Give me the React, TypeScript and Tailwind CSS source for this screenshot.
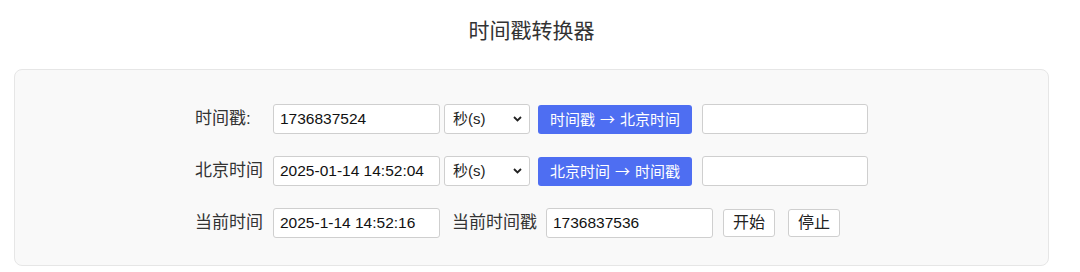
import React, { useState } from 'react';

const font = { fontFamily: '"Liberation Sans", "Noto Sans CJK SC", sans-serif' };
const cjk = { fontFamily: '"Noto Sans CJK SC", "Liberation Sans", sans-serif' };

function UnitSelect() {
  const [unit, setUnit] = useState('s');
  return (
    <div className="relative ml-[4px] w-[86px] h-[30px]">
      <select
        value={unit}
        onChange={(e) => setUnit(e.target.value)}
        className="appearance-none w-full h-full bg-white border border-[#cfcfcf] rounded-[3px] pl-[8px] text-[15px] text-[#222] outline-none"
      >
        <option value="s">秒(s)</option>
        <option value="ms">毫秒(ms)</option>
      </select>
      <svg
        className="absolute right-[8px] top-[12px] pointer-events-none"
        width="9"
        height="6"
        viewBox="0 0 9 6"
      >
        <path d="M1 1l3.5 3.5L8 1" fill="none" stroke="#222" strokeWidth="1.8" />
      </svg>
    </div>
  );
}

function ConvertButton({ from, to }: { from: string; to: string }) {
  return (
    <button
      className="ml-[8px] w-[154px] h-[29px] rounded-[3px] bg-[#4e6ef2] text-white text-[15px] flex items-center justify-center"
      style={cjk}
    >
      {from}
      <span className="mx-[5px]">→</span>
      {to}
    </button>
  );
}

export default function App() {
  const [ts, setTs] = useState('1736837524');
  const [bj, setBj] = useState('2025-01-14 14:52:04');

  const inputCls =
    'h-[30px] bg-white border border-[#cfcfcf] rounded-[3px] px-[6px] text-[15.5px] text-[#111] outline-none';

  return (
    <div className="w-[1063px] px-[14px] bg-white" style={font}>
      {/* Title */}
      <div className="h-[62px] flex items-center justify-center text-[21px] text-[#333]">
        时间戳转换器
      </div>

      {/* Card */}
      <div className="mt-[7px] rounded-lg border border-[#e6e6e6] bg-[#f9f9f9] pt-[34px] pb-[27px]">
        <div className="w-fit mx-auto flex flex-col gap-[22px]">
          {/* Row 1 */}
          <div className="flex items-center">
            <span className="w-[78px] text-[17px] text-[#333]">时间戳:</span>
            <input value={ts} onChange={(e) => setTs(e.target.value)} className={`${inputCls} w-[167px]`} />
            <UnitSelect />
            <ConvertButton from="时间戳" to="北京时间" />
            <input readOnly className={`${inputCls} ml-[10px] w-[166px]`} />
          </div>

          {/* Row 2 */}
          <div className="flex items-center">
            <span className="w-[78px] text-[17px] text-[#333]">北京时间</span>
            <input value={bj} onChange={(e) => setBj(e.target.value)} className={`${inputCls} w-[167px]`} />
            <UnitSelect />
            <ConvertButton from="北京时间" to="时间戳" />
            <input readOnly className={`${inputCls} ml-[10px] w-[166px]`} />
          </div>

          {/* Row 3 */}
          <div className="flex items-center">
            <span className="w-[78px] text-[17px] text-[#333]">当前时间</span>
            <input readOnly value="2025-1-14 14:52:16" className={`${inputCls} w-[167px]`} />
            <span className="ml-[12px] w-[94px] text-[17px] text-[#333]">当前时间戳</span>
            <input readOnly value="1736837536" className={`${inputCls} w-[167px]`} />
            <button className="ml-[10px] w-[52px] h-[28px] rounded-[3px] bg-white border border-[#cfcfcf] text-[16px] text-[#222]">
              开始
            </button>
            <button className="ml-[13px] w-[52px] h-[28px] rounded-[3px] bg-white border border-[#cfcfcf] text-[16px] text-[#222]">
              停止
            </button>
          </div>
        </div>
      </div>
    </div>
  );
}
